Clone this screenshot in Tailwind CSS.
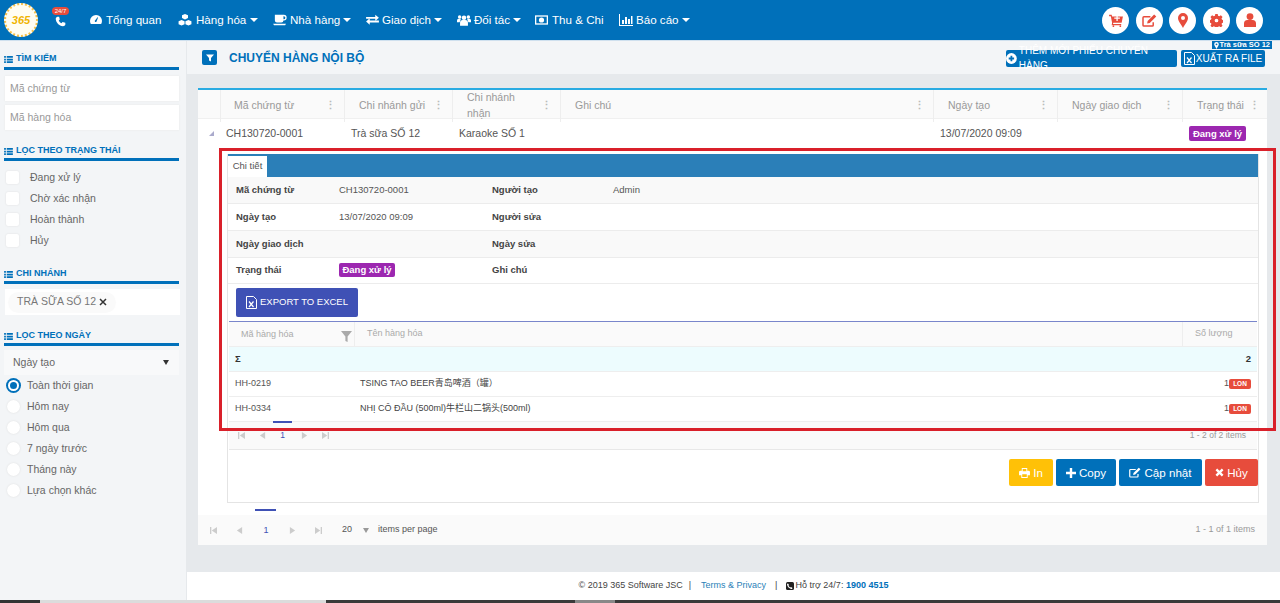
<!DOCTYPE html>
<html lang="vi">
<head>
<meta charset="UTF-8">
<title>Chuyển hàng nội bộ</title>
<script src="https://cdn.jsdelivr.net/npm/@tailwindcss/browser@4"></script>
</head>
<body class="h-[603px] w-[1280px] overflow-hidden bg-[#e6e9ec] font-['Liberation_Sans','Noto_Sans_CJK_SC',sans-serif] text-[#555]">
<div class="relative h-[603px] flex flex-col">

  <!-- thanh menu -->
  <header class="h-[41px] shrink-0 bg-[#0070ba] border-b border-[#cfe0ee] flex items-center text-white relative">
    <div class="ml-[4px] w-[34px] h-[34px] rounded-full bg-[#fffdf2] flex items-center justify-center border-2 border-dotted border-[#f5c04a]">
      <span class="text-[#f0b400] font-bold italic text-[11px]">365</span>
    </div>
    <div class="relative ml-[17px] mt-[2px] w-[12px]">
      <svg viewBox="0 0 16 16" class="w-[11px] h-[11px]" fill="#fff"><path d="M3.5 1 6 1.2 7 5 5.4 6.4c.8 1.8 2.2 3.2 4 4L11 8.9l4 1 .1 2.6c-.5 1.5-2 2.5-3.6 2.4C6 14.3 1.6 9.8 1.1 4.3 1 2.800 2 1.500 3.500 1z"/></svg>
      <span class="absolute left-[-3px] top-[-9px] w-[17px] h-[8px] rounded-full bg-[#e74c3c] text-[6px] leading-[8px] text-center">24/7</span>
    </div>
    <nav class="flex items-center ml-[23px] text-[11.6px] text-white">
      <a class="flex items-center gap-[4px] w-[88px]">
        <svg viewBox="0 0 16 14" class="w-[12px] h-[11px]" fill="#fff"><path d="M8 1a8 8 0 0 0-8 8c0 1.500.4 2.900 1.100 4h13.800A8 8 0 0 0 8 1zM7 8l3-4 .8.4L9 9a1.300 1.300 0 1 1-2-1z"/></svg>
        Tổng quan</a>
      <a class="flex items-center gap-[4px] w-[95px]">
        <svg viewBox="0 0 16 14" class="w-[14px] h-[12px]" fill="#fff"><path d="M8 0l3.500 1.500v3.300L8 6.300 4.500 4.800V1.500zM4 7l3.500 1.500v3.500L4 13.500.5 12V8.500zM12 7l3.500 1.500V12L12 13.500 8.500 12V8.500z"/></svg>
        <span>Hàng hóa</span><span class="w-0 h-0 border-x-[4px] border-x-transparent border-t-[4px] border-t-white"></span></a>
      <a class="flex items-center gap-[3px] w-[93px]">
        <svg viewBox="0 0 16 14" class="w-[14px] h-[12px]" fill="#fff"><path d="M2 1h10.500a3 3 0 0 1 0 6.500H12A2.500 2.500 0 0 1 9.500 10h-5A2.500 2.500 0 0 1 2 7.500zM12 2.500v3.500h.5a1.700 1.700 0 0 0 0-3.500zM0 11.500h15l-1 1.500H1z"/></svg>
        <span>Nhà hàng</span><span class="w-0 h-0 border-x-[4px] border-x-transparent border-t-[4px] border-t-white"></span></a>
      <a class="flex items-center gap-[3px] w-[91px]">
        <svg viewBox="0 0 14 12" class="w-[13px] h-[11px]" fill="#fff"><path d="M0 3h10V.5L14 4l-4 3.500V5H0zM14 7H4V4.500L0 8l4 3.500V9h10z" transform="translate(0 .2)"/></svg>
        <span>Giao dịch</span><span class="w-0 h-0 border-x-[4px] border-x-transparent border-t-[4px] border-t-white"></span></a>
      <a class="flex items-center gap-[3px] w-[78px]">
        <svg viewBox="0 0 16 13" class="w-[14px] h-[12px]" fill="#fff"><circle cx="8" cy="4" r="2.600"/><circle cx="3" cy="3" r="2"/><circle cx="13" cy="3" r="2"/><path d="M3.500 13V9.500a3 3 0 0 1 3-3h3a3 3 0 0 1 3 3V13zM0 9V7a1.800 1.800 0 0 1 1.800-1.800h2.700L3 9zM16 9V7a1.800 1.800 0 0 0-1.800-1.800h-2.700L13 9z"/></svg>
        <span>Đối tác</span><span class="w-0 h-0 border-x-[4px] border-x-transparent border-t-[4px] border-t-white"></span></a>
      <a class="flex items-center gap-[4px] w-[84px]">
        <svg viewBox="0 0 14 10" class="w-[13px] h-[10px]"><rect x=".7" y=".7" width="12.600" height="8.600" fill="none" stroke="#fff" stroke-width="1.400"/><circle cx="7" cy="5" r="2.800" fill="#fff"/></svg>
        Thu &amp; Chi</a>
      <a class="flex items-center gap-[3px]">
        <svg viewBox="0 0 14 12" class="w-[14px] h-[12px]" fill="#fff"><path d="M0 0h1v11h13v1H0zM3 6h2v4H3zM6 3h2v7H6zM9 5h2v5H9zM12 2h1.500v8H12z"/></svg>
        <span>Báo cáo</span><span class="w-0 h-0 border-x-[4px] border-x-transparent border-t-[4px] border-t-white"></span></a>
    </nav>
    <div class="ml-auto mr-[17px] flex gap-[6.500px]">
      <span class="w-[27px] h-[27px] rounded-full bg-white flex items-center justify-center">
        <svg viewBox="0 0 16 15" class="w-[14px] h-[13px]" fill="#e74c3c"><path d="M0 1h3l.5 2H16l-1.500 7H5L4.500 11.500H14V13H3L3.500 10 2 2.500H0zM6 4v1.500h2.500V8H10V5.500h2.500V4H10V3H8.500v1z"/><circle cx="5" cy="14" r="1"/><circle cx="13" cy="14" r="1"/></svg>
      </span>
      <span class="w-[27px] h-[27px] rounded-full bg-white flex items-center justify-center">
        <svg viewBox="0 0 16 14" class="w-[15px] h-[13px]"><path d="M12 9v3a1 1 0 0 1-1 1H2a1 1 0 0 1-1-1V4a1 1 0 0 1 1-1h7" fill="none" stroke="#e74c3c" stroke-width="1.600"/><path d="M6 7.500 13 .5l2.300 2.300-7 7-2.800.5z" fill="#e74c3c"/></svg>
      </span>
      <span class="w-[27px] h-[27px] rounded-full bg-white flex items-center justify-center">
        <svg viewBox="0 0 10 15" class="w-[10px] h-[15px]"><path fill-rule="evenodd" d="M5 0a5 5 0 0 1 5 5c0 3-3.500 7-5 10C3.500 12 0 8 0 5a5 5 0 0 1 5-5zm0 3a2 2 0 1 0 0 4 2 2 0 0 0 0-4z" fill="#e74c3c"/></svg>
      </span>
      <span class="w-[27px] h-[27px] rounded-full bg-white flex items-center justify-center">
        <svg viewBox="0 0 14 14" class="w-[13px] h-[13px]"><path fill-rule="evenodd" d="M5.700 0h2.600l.4 2 1.300.5L11.700 1.400l1.800 1.800-1.100 1.700.6 1.300 2 .4v2.600l-2 .4-.6 1.300 1.100 1.700-1.800 1.800-1.700-1.100-1.300.5-.4 2H5.700l-.4-2-1.300-.5-1.700 1.100L.5 12.600l1.100-1.700-.6-1.300-2-.4V6.600l2-.4.6-1.300L.5 3.200l1.800-1.800L4 2.500l1.300-.5zM7 5a2 2 0 1 0 0 4 2 2 0 0 0 0-4z" fill="#e74c3c"/></svg>
      </span>
      <span class="w-[27px] h-[27px] rounded-full bg-white flex items-center justify-center">
        <svg viewBox="0 0 12 14" class="w-[12px] h-[14px]" fill="#e74c3c"><circle cx="6" cy="3.600" r="3.400"/><path d="M0 14v-3.500A3.500 3.500 0 0 1 3.500 7h5a3.500 3.500 0 0 1 3.500 3.500V14z"/></svg>
      </span>
    </div>
  </header>

  <div class="flex flex-1 min-h-0">
    <!-- cột bộ lọc -->
    <aside class="w-[186px] shrink-0 bg-[#f3f5f7] px-[4px] text-[10.500px] text-[#666]">
      <h3 class="mt-[11px] h-[14px] border-b-0 flex items-center gap-[3px] text-[9px] font-bold text-[#0070ba]">
        <svg viewBox="0 0 10 8" class="w-[9px] h-[7px]" fill="#0070ba"><path d="M0 0h2v2H0zM3 0h7v2H3zM0 3h2v2H0zM3 3h7v2H3zM0 6h2v2H0zM3 6h7v2H3z"/></svg>TÌM KIẾM</h3>
      <div class="h-[3px] mt-[1px] bg-[#0070ba] w-[175px]"></div>
      <div class="mt-[6px] ml-[1px] w-[174px] h-[25px] bg-white px-[5px] flex items-center text-[#999] text-[10.500px] shadow-[0_0_2px_#e8e8e8]">Mã chứng từ</div>
      <div class="mt-[4px] ml-[1px] w-[174px] h-[25px] bg-white px-[5px] flex items-center text-[#999] text-[10.500px] shadow-[0_0_2px_#e8e8e8]">Mã hàng hóa</div>

      <h3 class="mt-[14px] h-[14px] flex items-center gap-[3px] text-[9px] font-bold text-[#0070ba]">
        <svg viewBox="0 0 10 8" class="w-[9px] h-[7px]" fill="#0070ba"><path d="M0 0h2v2H0zM3 0h7v2H3zM0 3h2v2H0zM3 3h7v2H3zM0 6h2v2H0zM3 6h7v2H3z"/></svg>LỌC THEO TRẠNG THÁI</h3>
      <div class="h-[3px] bg-[#0070ba] w-[175px]"></div>
      <ul class="mt-[6px]">
        <li class="h-[21px] flex items-center gap-[11px] pl-[2px]"><span class="w-[13px] h-[13px] bg-white rounded-[2px] shadow-[0_0_2px_#dcdcdc]"></span>Đang xử lý</li>
        <li class="h-[21px] flex items-center gap-[11px] pl-[2px]"><span class="w-[13px] h-[13px] bg-white rounded-[2px] shadow-[0_0_2px_#dcdcdc]"></span>Chờ xác nhận</li>
        <li class="h-[21px] flex items-center gap-[11px] pl-[2px]"><span class="w-[13px] h-[13px] bg-white rounded-[2px] shadow-[0_0_2px_#dcdcdc]"></span>Hoàn thành</li>
        <li class="h-[21px] flex items-center gap-[11px] pl-[2px]"><span class="w-[13px] h-[13px] bg-white rounded-[2px] shadow-[0_0_2px_#dcdcdc]"></span>Hủy</li>
      </ul>

      <h3 class="mt-[16px] h-[14px] flex items-center gap-[3px] text-[9px] font-bold text-[#0070ba]">
        <svg viewBox="0 0 10 8" class="w-[9px] h-[7px]" fill="#0070ba"><path d="M0 0h2v2H0zM3 0h7v2H3zM0 3h2v2H0zM3 3h7v2H3zM0 6h2v2H0zM3 6h7v2H3z"/></svg>CHI NHÁNH</h3>
      <div class="h-[3px] bg-[#0070ba] w-[175px]"></div>
      <div class="mt-[5px] ml-[1px] w-[175px] h-[26px] bg-white flex items-center pl-[3px]">
        <span class="h-[21px] pl-[9px] pr-[9px] rounded-full bg-[#fafafa] flex items-center gap-[3px] text-[#777]">TRÀ SỮA SỐ 12
          <svg viewBox="0 0 8 8" class="w-[8px] h-[8px]"><path d="M1 1l6 6M7 1 1 7" stroke="#333" stroke-width="1.500"/></svg>
        </span>
      </div>

      <h3 class="mt-[14px] h-[14px] flex items-center gap-[3px] text-[9px] font-bold text-[#0070ba]">
        <svg viewBox="0 0 10 8" class="w-[9px] h-[7px]" fill="#0070ba"><path d="M0 0h2v2H0zM3 0h7v2H3zM0 3h2v2H0zM3 3h7v2H3zM0 6h2v2H0zM3 6h7v2H3z"/></svg>LỌC THEO NGÀY</h3>
      <div class="h-[3px] bg-[#0070ba] w-[175px]"></div>
      <div class="mt-[4px] w-[175px] h-[25px] bg-[#f8f9fa] flex items-center justify-between pl-[9px] pr-[10px]">Ngày tạo
        <span class="w-0 h-0 border-x-[3.500px] border-x-transparent border-t-[5px] border-t-[#333]"></span>
      </div>
      <ul class="">
        <li class="h-[21px] flex items-center gap-[6px] pl-[2px]"><span class="w-[15px] h-[15px] rounded-full bg-[#0070ba] flex items-center justify-center"><span class="w-[11px] h-[11px] rounded-full border-2 border-white bg-[#0070ba]"></span></span>Toàn thời gian</li>
        <li class="h-[21px] flex items-center gap-[7px] pl-[3px]"><span class="w-[13px] h-[13px] rounded-full bg-white shadow-[0_0_2px_#dcdcdc]"></span>Hôm nay</li>
        <li class="h-[21px] flex items-center gap-[7px] pl-[3px]"><span class="w-[13px] h-[13px] rounded-full bg-white shadow-[0_0_2px_#dcdcdc]"></span>Hôm qua</li>
        <li class="h-[21px] flex items-center gap-[7px] pl-[3px]"><span class="w-[13px] h-[13px] rounded-full bg-white shadow-[0_0_2px_#dcdcdc]"></span>7 ngày trước</li>
        <li class="h-[21px] flex items-center gap-[7px] pl-[3px]"><span class="w-[13px] h-[13px] rounded-full bg-white shadow-[0_0_2px_#dcdcdc]"></span>Tháng này</li>
        <li class="h-[21px] flex items-center gap-[7px] pl-[3px]"><span class="w-[13px] h-[13px] rounded-full bg-white shadow-[0_0_2px_#dcdcdc]"></span>Lựa chọn khác</li>
      </ul>
    </aside>

    <div class="w-[1px] bg-[#e6e9ec]"></div>

    <!-- nội dung chính -->
    <main class="flex-1 min-w-0 flex flex-col">
      <div class="h-[33px] shrink-0 bg-[#f3f5f7] flex items-center pl-[15px] pr-[15px] relative">
        <span class="w-[15px] h-[15px] rounded-[2px] bg-[#0070ba] flex items-center justify-center">
          <svg viewBox="0 0 8 8" class="w-[8px] h-[8px]" fill="#fff"><path d="M0 .5h8L5 4v3.500L3 6.500V4z"/></svg>
        </span>
        <h1 class="ml-[12px] text-[12px] font-bold text-[#0070ba]">CHUYỂN HÀNG NỘI BỘ</h1>
        <span class="absolute right-[8px] top-0 h-[8px] px-[2px] bg-[#0070ba] text-white text-[7.500px] leading-[8px] font-bold flex items-center gap-[1px]">
          <svg viewBox="0 0 10 15" class="w-[5px] h-[7px]"><path fill-rule="evenodd" d="M5 0a5 5 0 0 1 5 5c0 3-3.500 7-5 10C3.500 12 0 8 0 5a5 5 0 0 1 5-5zm0 3a2 2 0 1 0 0 4 2 2 0 0 0 0-4z" fill="#fff"/></svg>Trà sữa SỐ 12</span>
        <div class="ml-auto flex gap-[4px] mt-[1px]">
          <a class="w-[171px] h-[17px] rounded-[2px] bg-[#0070ba] text-white text-[10px] flex items-center justify-center gap-[2px]">
            <svg viewBox="0 0 12 12" class="w-[11px] h-[11px]"><circle cx="6" cy="6" r="6" fill="#fff"/><path d="M3 5h2V3h2v2h2v2H7v2H5V7H3z" fill="#0070ba"/></svg>THÊM MỚI PHIẾU CHUYỂN HÀNG</a>
          <a class="w-[84px] h-[17px] rounded-[2px] bg-[#0070ba] text-white text-[10px] flex items-center justify-center gap-[1px]">
            <svg viewBox="0 0 11 13" class="w-[11px] h-[13px]"><path d="M.5.500h7l3 3v9H.5z" fill="none" stroke="#fff"/><path d="M3 5.500l4.500 5.500M7.500 5.500 3 11" stroke="#fff" stroke-width="1.200"/></svg>XUẤT RA FILE</a>
        </div>
      </div>

      <div class="flex-1 min-h-0 px-[11px] pt-[14px] pb-[27px] pr-[13px]">
        <section class="h-[457px] bg-white border-t-2 border-[#29abe2] flex flex-col">
          <!-- tiêu đề lưới -->
          <div class="h-[29px] shrink-0 grid grid-cols-[23px_124px_108px_108px_373px_124px_125px_1fr] bg-[#fafafa] text-[#999] text-[10.500px] border-b border-[#f0f0f0]">
            <div class="border-r border-[#eee]"></div>
            <div class="flex items-center justify-between pl-[13px] pr-[8px] border-r border-[#eee]">Mã chứng từ<span class="text-[#bbb] text-[11px] leading-none font-bold">⋮</span></div>
            <div class="flex items-center justify-between pl-[14px] pr-[8px] border-r border-[#eee]">Chi nhánh gửi<span class="text-[#bbb] text-[11px] leading-none font-bold">⋮</span></div>
            <div class="flex items-center justify-between pl-[14px] pr-[8px] border-r border-[#eee]">Chi nhánh nhận<span class="text-[#bbb] text-[11px] leading-none font-bold">⋮</span></div>
            <div class="flex items-center justify-between pl-[14px] pr-[8px] border-r border-[#eee]">Ghi chú<span class="text-[#bbb] text-[11px] leading-none font-bold">⋮</span></div>
            <div class="flex items-center justify-between pl-[14px] pr-[8px] border-r border-[#eee]">Ngày tạo<span class="text-[#bbb] text-[11px] leading-none font-bold">⋮</span></div>
            <div class="flex items-center justify-between pl-[14px] pr-[8px] border-r border-[#eee]">Ngày giao dịch<span class="text-[#bbb] text-[11px] leading-none font-bold">⋮</span></div>
            <div class="flex items-center justify-between pl-[14px] pr-[7px]">Trạng thái<span class="text-[#bbb] text-[11px] leading-none font-bold">⋮</span></div>
          </div>
          <!-- dòng dữ liệu -->
          <div class="h-[29px] shrink-0 grid grid-cols-[23px_124px_108px_108px_373px_124px_125px_1fr] items-center text-[10.500px] text-[#555]">
            <div class="pl-[11px]"><span class="block w-0 h-0 border-l-[5px] border-l-transparent border-b-[5px] border-b-[#aac]"></span></div>
            <div class="pl-[5px]">CH130720-0001</div>
            <div class="pl-[6px]">Trà sữa SỐ 12</div>
            <div class="pl-[6px]">Karaoke SỐ 1</div>
            <div></div>
            <div class="pl-[6px]">13/07/2020 09:09</div>
            <div></div>
            <div class="pl-[6px]"><span class="inline-block w-[57px] h-[15px] rounded-[2px] bg-[#9c27b0] text-white text-[9.500px] font-bold leading-[15px] text-center">Đang xử lý</span></div>
          </div>
          <!-- phần chi tiết -->
          <div class="ml-[29px] mr-[8px] mt-[6px] h-[349px] shrink-0 border-x border-b border-[#e4e4e4] flex flex-col">
            <div class="h-[23px] shrink-0 bg-[#2b7fb8] flex items-end">
              <span class="w-[39px] h-[22px] bg-white text-[9.500px] flex items-center justify-center border-t border-[#2b7fb8]">Chi tiết</span>
            </div>
            <div class="h-[27px] shrink-0 grid grid-cols-[103px_153px_121px_1fr] items-center pl-[8px] bg-[#f9f9f9] border-b border-[#ececec] text-[9.500px]">
              <span class="font-bold text-[#444]">Mã chứng từ</span><span>CH130720-0001</span><span class="font-bold text-[#444]">Người tạo</span><span>Admin</span>
            </div>
            <div class="h-[27px] shrink-0 grid grid-cols-[103px_153px_121px_1fr] items-center pl-[8px] border-b border-[#ececec] text-[9.500px]">
              <span class="font-bold text-[#444]">Ngày tạo</span><span>13/07/2020 09:09</span><span class="font-bold text-[#444]">Người sửa</span><span></span>
            </div>
            <div class="h-[27px] shrink-0 grid grid-cols-[103px_153px_121px_1fr] items-center pl-[8px] bg-[#f9f9f9] border-b border-[#ececec] text-[9.500px]">
              <span class="font-bold text-[#444]">Ngày giao dịch</span><span></span><span class="font-bold text-[#444]">Ngày sửa</span><span></span>
            </div>
            <div class="h-[26px] shrink-0 grid grid-cols-[103px_153px_121px_1fr] items-center pl-[8px] border-b border-[#ececec] text-[9.500px]">
              <span class="font-bold text-[#444]">Trạng thái</span><span><span class="inline-block w-[56px] h-[14px] rounded-[2px] bg-[#9c27b0] text-white font-bold leading-[14px] text-center">Đang xử lý</span></span><span class="font-bold text-[#444]">Ghi chú</span><span></span>
            </div>
            <div class="h-[37px] shrink-0 pl-[8px] pt-[4px]">
              <a class="w-[122px] h-[29px] rounded-[2px] bg-[#3f51b5] text-white text-[9.500px] flex items-center justify-center gap-[3px]">
                <svg viewBox="0 0 11 13" class="w-[11px] h-[13px]"><path d="M.5.500h7l3 3v9H.5z" fill="none" stroke="#fff"/><path d="M3 5.500l4.500 5.500M7.500 5.500 3 11" stroke="#fff" stroke-width="1.200"/></svg>EXPORT TO EXCEL</a>
            </div>
            <!-- lưới hàng hóa -->
            <div class="mx-[1px] border-t border-[#7986cb]">
              <div class="h-[25px] grid grid-cols-[126px_1fr_74px] bg-[#fafafa] text-[#aaa] text-[9px] border-b border-[#eee]">
                <div class="relative pl-[12px] pt-[6px] border-r border-[#eee]">Mã hàng hóa
                  <svg viewBox="0 0 10 10" class="absolute right-[2px] top-[9px] w-[11px] h-[11px]" fill="#aaa"><path d="M0 0h10L6 5v5L4 9V5z"/></svg>
                </div>
                <div class="flex items-center pl-[12px] border-r border-[#eee]">Tên hàng hóa</div>
                <div class="flex items-center pl-[12px]">Số lượng</div>
              </div>
              <div class="h-[25px] bg-[#edfcfe] border-b border-[#eee] flex items-center justify-between px-[6px] text-[9.500px] font-bold text-[#333]"><span>Σ</span><span>2</span></div>
              <div class="h-[25px] grid grid-cols-[125px_1fr_auto] items-center pl-[6px] pr-[6px] border-b border-[#eee] text-[9px]">
                <span>HH-0219</span><span class="text-[#444]">TSING TAO BEER青岛啤酒（罐）</span>
                <span class="flex items-center">1<span class="w-[22px] h-[10px] rounded-[2px] bg-[#e74c3c] text-white text-[6.500px] font-bold leading-[10px] text-center">LON</span></span>
              </div>
              <div class="h-[25px] grid grid-cols-[125px_1fr_auto] items-center pl-[6px] pr-[6px] border-b border-[#eee] text-[9px]">
                <span>HH-0334</span><span class="text-[#444]">NHỊ CÔ ĐẦU (500ml)牛栏山二锅头(500ml)</span>
                <span class="flex items-center">1<span class="w-[22px] h-[10px] rounded-[2px] bg-[#e74c3c] text-white text-[6.500px] font-bold leading-[10px] text-center">LON</span></span>
              </div>
              <div class="h-[28px] bg-[#fafafa] border-b border-[#e8e8e8] flex items-center justify-between pl-[9px] pr-[11px] text-[8.500px] text-[#999]">
                <div class="flex items-center gap-[14px] text-[#ccc]">
                  <svg viewBox="0 0 8 8" class="w-[7px] h-[7px]" fill="#ccc"><path d="M0 0h1.500v8H0zM8 0v8L2 4z"/></svg>
                  <svg viewBox="0 0 8 8" class="w-[7px] h-[7px]" fill="#ccc"><path d="M7 0v8L1 4z"/></svg>
                  <span class="relative text-[#3f51b5] w-[5px] text-center">1<span class="absolute left-[-7px] top-[-8px] w-[19px] h-[2px] bg-[#3f51b5]"></span></span>
                  <svg viewBox="0 0 8 8" class="ml-[2px] w-[7px] h-[7px]" fill="#ccc"><path d="M1 0v8l6-4z"/></svg>
                  <svg viewBox="0 0 8 8" class="w-[7px] h-[7px]" fill="#ccc"><path d="M0 0v8l6-4zM6.500 0H8v8H6.500z"/></svg>
                </div>
                <span>1 - 2 of 2 items</span>
              </div>
            </div>
            <div class="flex justify-end gap-[3px] mt-[9px] text-white text-[11.600px]">
              <a class="w-[44px] h-[27px] rounded-[2px] bg-[#ffc107] flex items-center justify-center gap-[3px]">
                <svg viewBox="0 0 12 11" class="w-[11px] h-[10px]" fill="#fff"><path fill-rule="evenodd" d="M3 0h6v3h1.500A1.500 1.500 0 0 1 12 4.500V8h-2.500v3h-7V8H0V4.500A1.500 1.500 0 0 1 1.500 3H3zM4 1v2.500h4V1zM3.500 7v3h5V7z"/></svg>In</a>
              <a class="w-[60px] h-[27px] rounded-[2px] bg-[#0070ba] flex items-center justify-center gap-[3px]">
                <svg viewBox="0 0 10 10" class="w-[10px] h-[10px]" fill="#fff"><path d="M3.800 0h2.400v3.800H10v2.400H6.200V10H3.800V6.200H0V3.800h3.800z"/></svg>Copy</a>
              <a class="w-[83px] h-[27px] rounded-[2px] bg-[#0070ba] flex items-center justify-center gap-[3px]">
                <svg viewBox="0 0 16 14" class="w-[12px] h-[11px]"><path d="M12 9v3a1 1 0 0 1-1 1H2a1 1 0 0 1-1-1V4a1 1 0 0 1 1-1h7" fill="none" stroke="#fff" stroke-width="1.600"/><path d="M6 7.500 13 .5l2.300 2.300-7 7-2.800.5z" fill="#fff"/></svg>Cập nhật</a>
              <a class="w-[53px] h-[27px] rounded-[2px] bg-[#e74c3c] flex items-center justify-center gap-[3px]">
                <svg viewBox="0 0 10 10" class="w-[9px] h-[9px]"><path d="M1.500 1.500l7 7M8.500 1.500l-7 7" stroke="#fff" stroke-width="2.600"/></svg>Hủy</a>
            </div>
          </div>
          <!-- phân trang -->
          <div class="flex-1 mt-[12px] bg-[#fafafa] flex items-center justify-between pl-[12px] pr-[12px] text-[9px] text-[#999]">
            <div class="flex items-center">
              <svg viewBox="0 0 8 8" class="w-[7px] h-[7px]" fill="#ccc"><path d="M0 0h1.500v8H0zM8 0v8L2 4z"/></svg>
              <svg viewBox="0 0 8 8" class="ml-[19px] w-[7px] h-[7px]" fill="#ccc"><path d="M7 0v8L1 4z"/></svg>
              <span class="relative ml-[20px] mt-[2px] text-[#3f51b5] w-[6px] text-center">1<span class="absolute left-[-8px] top-[-15px] w-[21px] h-[2px] bg-[#3f51b5]"></span></span>
              <svg viewBox="0 0 8 8" class="ml-[20px] w-[7px] h-[7px]" fill="#ccc"><path d="M1 0v8l6-4z"/></svg>
              <svg viewBox="0 0 8 8" class="ml-[19px] w-[7px] h-[7px]" fill="#ccc"><path d="M0 0v8l6-4zM6.500 0H8v8H6.500z"/></svg>
              <span class="ml-[20px] text-[#555]">20</span>
              <span class="ml-[11px] w-0 h-0 border-x-[3.500px] border-x-transparent border-t-[5px] border-t-[#999]"></span>
              <span class="ml-[9px] text-[#555]">items per page</span>
            </div>
            <span>1 - 1 of 1 items</span>
          </div>
        </section>
      </div>

      <footer class="h-[28px] shrink-0 bg-white flex items-center justify-center gap-[5px] text-[9px] text-[#444]">
        <span>© 2019 365 Software JSC</span><span class="ml-[1px]">|</span>
        <a class="ml-[5px] text-[#2b7fb8]">Terms &amp; Privacy</a><span class="ml-[4px]">|</span>
        <svg viewBox="0 0 8 8" class="ml-[4px] w-[8px] h-[8px]"><rect width="8" height="8" rx="1.500" fill="#222"/><path d="M2 1.500 3 3 2.500 3.800c.4.700 1 1.300 1.700 1.700L5 5l1.500 1-.5 1C3.500 7 1 4.500 1 2z" fill="#fff"/></svg>
        <span class="-ml-[4px]">Hỗ trợ 24/7: <b class="text-[#0070ba]">1900 4515</b></span>
      </footer>
    </main>
  </div>

  <!-- vệt tối sát mép dưới -->
  <div class="h-[3px] shrink-0 flex bg-[#3a3a3a]">
    <span class="w-[40px] bg-[#333]"></span>
    <span class="w-[286px] bg-[#dcdcdc]"></span>
    <span class="ml-[249px] w-[40px] bg-[#888]"></span>
  </div>

  <!-- khung đỏ đánh dấu vùng chi tiết -->
  <div class="absolute left-[219px] top-[148px] w-[1057px] h-[283px] border-[3px] border-[#d9202a] pointer-events-none"></div>
</div>
</body>
</html>
